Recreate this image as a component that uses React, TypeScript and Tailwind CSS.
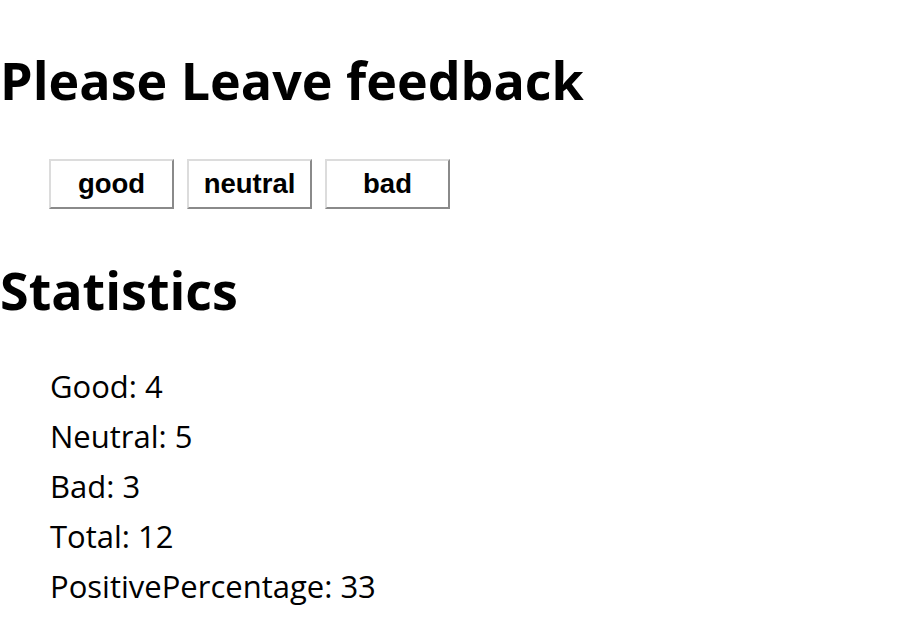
const buttons = ["good", "neutral", "bad"];

const stats = [
  ["Good", 4],
  ["Neutral", 5],
  ["Bad", 3],
  ["Total", 12],
  ["PositivePercentage", 33],
] as const;

export default function App() {
  return (
    <div className="min-h-screen bg-white text-black font-['Open_Sans',sans-serif]">
      <h1 className="pt-[44px] text-[52px] font-bold leading-[72px]">Please Leave feedback</h1>

      {/* Feedback buttons */}
      <div className="flex gap-[13px] pl-[49px] pt-[43px]">
        {buttons.map((b) => (
          <button
            key={b}
            className="h-[50px] w-[125px] border-2 border-t-[#dcdcdc] border-l-[#dcdcdc] border-b-[#8a8a8a] border-r-[#8a8a8a] bg-white text-[27.5px] font-bold font-['Liberation_Sans',sans-serif]"
          >
            {b}
          </button>
        ))}
      </div>

      <h2 className="pt-[45px] text-[52px] font-bold leading-[72px]">Statistics</h2>

      <div className="pl-[50px] pt-[35px]">
        {stats.map(([label, value]) => (
          <div key={label} className="h-[50px] text-[31px] font-medium leading-[50px]">
            {label}: {value}
          </div>
        ))}
      </div>
    </div>
  );
}
